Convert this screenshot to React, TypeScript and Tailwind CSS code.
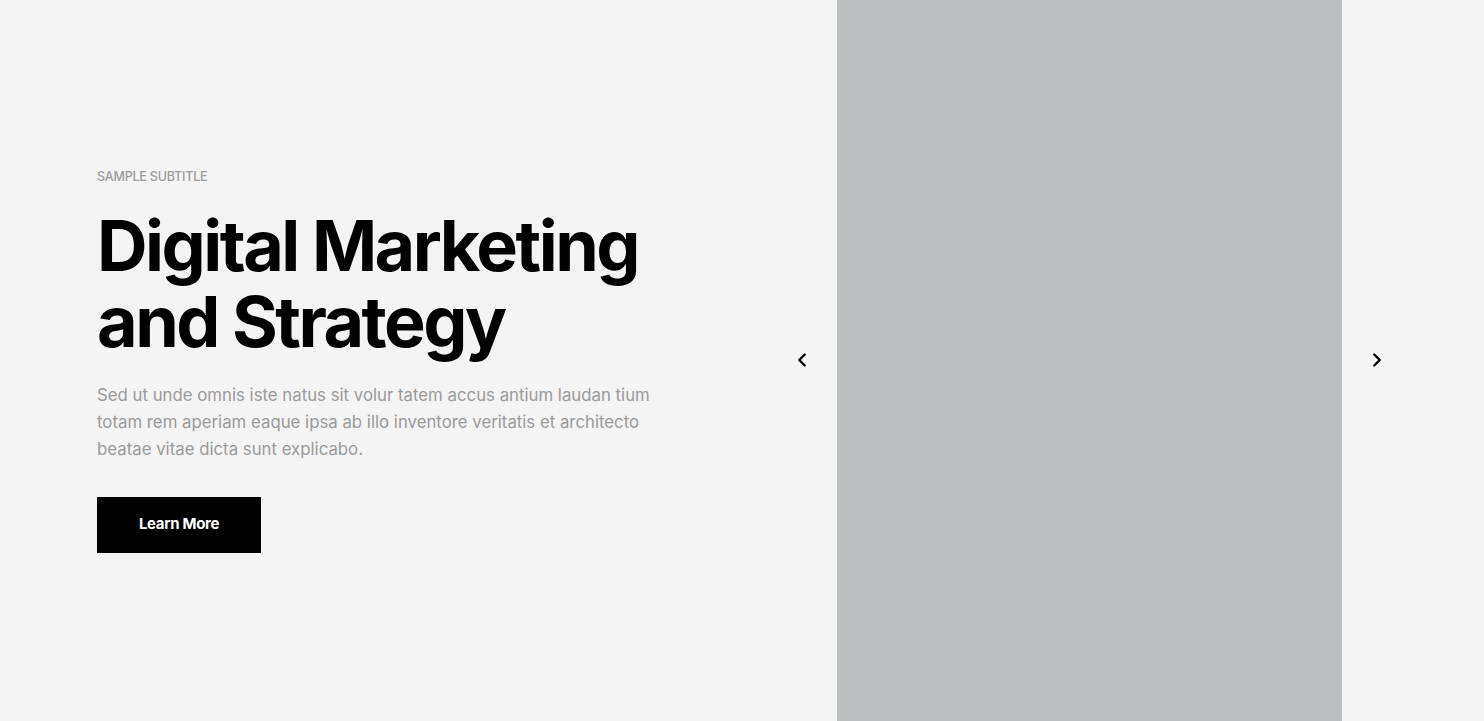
import React from 'react';
import { ChevronLeft, ChevronRight } from 'lucide-react';

export default function App() {
  return (
    <div className="relative flex h-[721px] w-full overflow-hidden bg-[#f4f4f4] font-['Inter',sans-serif]">
      <div className="flex w-[837px] shrink-0 flex-col justify-center pl-[97px]">
        <p className="text-[12.5px] font-medium uppercase leading-4 tracking-[-0.2px] text-[#9a9a9a]">Sample Subtitle</p>
        <h1 className="mt-[23px] text-[70px] font-bold leading-[76px] tracking-[-2.5px] text-black">
          Digital Marketing
          <br />
          and Strategy
        </h1>
        <p className="mt-[22px] w-[590px] text-[16.8px] leading-[27px] text-[#9a9a9a]">
          Sed ut unde omnis iste natus sit volur tatem accus antium laudan tium totam rem aperiam eaque ipsa ab illo
          inventore veritatis et architecto beatae vitae dicta sunt explicabo.
        </p>
        <div className="mt-[34px]">
          <button className="h-[56px] w-[164px] bg-black text-[15px] font-bold tracking-[-0.3px] text-white">
            Learn More
          </button>
        </div>
      </div>
      <div className="w-[505px] shrink-0 bg-[#bcbdbf]" />
      <div className="flex-1" />
      <button className="absolute left-[791px] top-[349px] text-black">
        <ChevronLeft size={22} strokeWidth={2.6} />
      </button>
      <button className="absolute left-[1366px] top-[349px] text-black">
        <ChevronRight size={22} strokeWidth={2.6} />
      </button>
    </div>
  );
}
